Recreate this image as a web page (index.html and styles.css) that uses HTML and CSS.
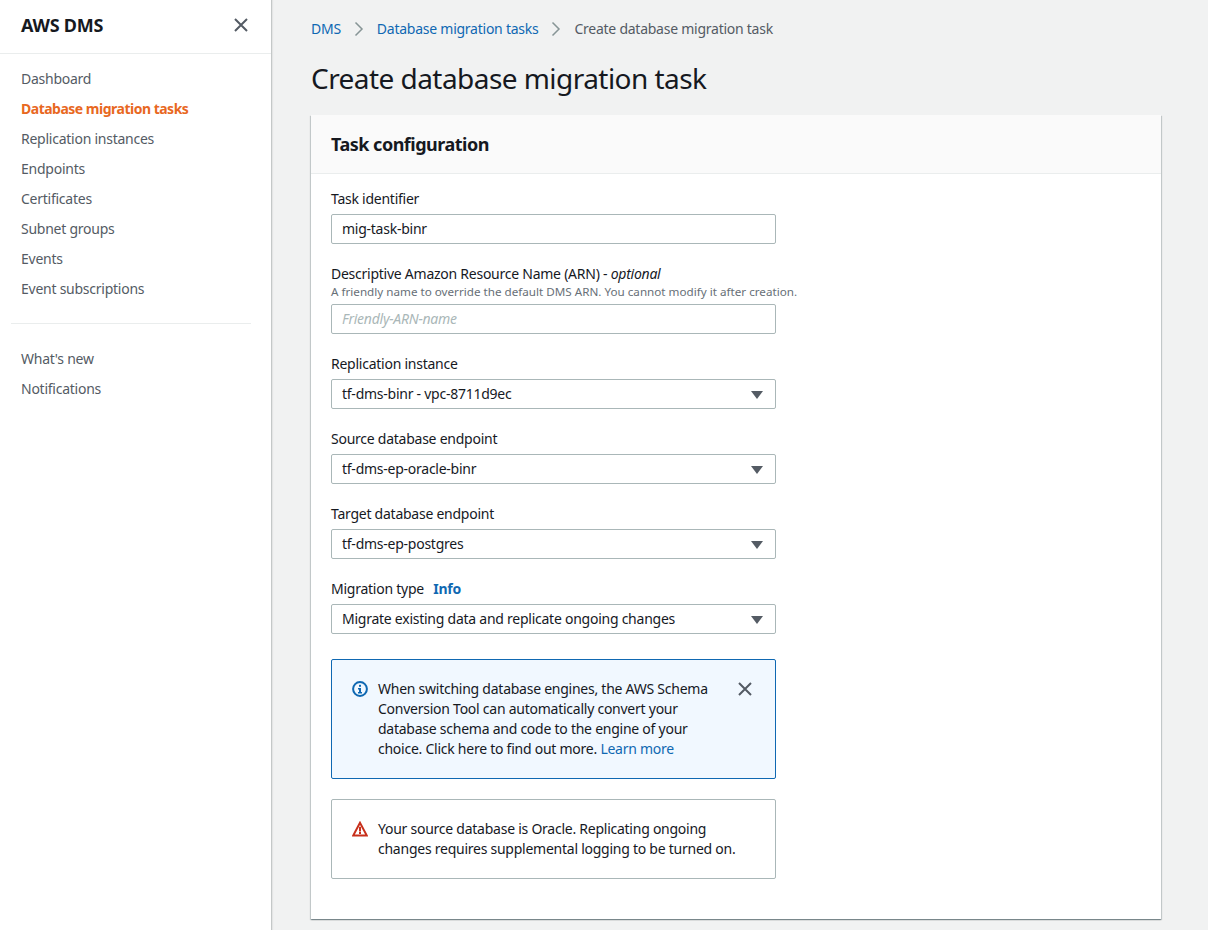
FILE: index.html
```html
<!DOCTYPE html>
<html lang="en">
<head>
    <meta charset="UTF-8">
    <title>Create database migration task</title>
    <link rel="stylesheet" href="styles.css">
</head>
<body>
    <div class="layout">
        <nav class="sidebar">
            <div class="sidebar-header">
                <span class="sidebar-title">AWS DMS</span>
                <svg class="icon-close" width="16" height="16" viewBox="0 0 16 16"><path d="M2 2l12 12M14 2L2 14"/></svg>
            </div>
            <ul class="nav-list">
                <li>Dashboard</li>
                <li class="active">Database migration tasks</li>
                <li>Replication instances</li>
                <li>Endpoints</li>
                <li>Certificates</li>
                <li>Subnet groups</li>
                <li>Events</li>
                <li>Event subscriptions</li>
            </ul>
            <div class="nav-divider"></div>
            <ul class="nav-list nav-list-second">
                <li>What's new</li>
                <li>Notifications</li>
            </ul>
        </nav>

        <main class="content">
            <div class="breadcrumbs">
                <a class="link">DMS</a>
                <svg class="crumb-arrow" width="10" height="16" viewBox="0 0 10 16"><path d="M1.5 1.5L8 8l-6.5 6.5"/></svg>
                <a class="link">Database migration tasks</a>
                <svg class="crumb-arrow" width="10" height="16" viewBox="0 0 10 16"><path d="M1.5 1.5L8 8l-6.5 6.5"/></svg>
                <span class="crumb-current">Create database migration task</span>
            </div>
            <h1 class="page-title">Create database migration task</h1>

            <section class="card">
                <div class="card-header">Task configuration</div>
                <div class="card-body">
                    <div class="field">
                        <div class="field-label">Task identifier</div>
                        <div class="input">mig-task-binr</div>
                    </div>
                    <div class="field">
                        <div class="field-label">Descriptive Amazon Resource Name (ARN) - <i>optional</i></div>
                        <div class="field-desc">A friendly name to override the default DMS ARN. You cannot modify it after creation.</div>
                        <div class="input placeholder">Friendly-ARN-name</div>
                    </div>
                    <div class="field">
                        <div class="field-label">Replication instance</div>
                        <div class="input select">tf-dms-binr - vpc-8711d9ec<span class="caret"></span></div>
                    </div>
                    <div class="field">
                        <div class="field-label">Source database endpoint</div>
                        <div class="input select">tf-dms-ep-oracle-binr<span class="caret"></span></div>
                    </div>
                    <div class="field">
                        <div class="field-label">Target database endpoint</div>
                        <div class="input select">tf-dms-ep-postgres<span class="caret"></span></div>
                    </div>
                    <div class="field">
                        <div class="field-label">Migration type <a class="link info-link">Info</a></div>
                        <div class="input select">Migrate existing data and replicate ongoing changes<span class="caret"></span></div>
                    </div>

                    <div class="alert alert-info">
                        <svg class="alert-icon" width="16" height="16" viewBox="0 0 16 16">
                            <circle cx="8" cy="8" r="6.9" fill="none" stroke="#0f68b2" stroke-width="2"/>
                            <path d="M6 7h3v4h1v1.5H6V11h1V8.5H6z" fill="#0f68b2"/>
                            <rect x="7" y="3.8" width="2" height="2" fill="#0f68b2"/>
                        </svg>
                        <p class="alert-text">When switching database engines, the AWS Schema Conversion Tool can automatically convert your database schema and code to the engine of your choice. Click here to find out more. <a class="link">Learn more</a></p>
                        <svg class="icon-close alert-close" width="16" height="16" viewBox="0 0 16 16"><path d="M2 2l12 12M14 2L2 14"/></svg>
                    </div>

                    <div class="alert alert-warning">
                        <svg class="alert-icon" width="16" height="16" viewBox="0 0 16 16">
                            <path d="M8 1.8L1.2 14.6h13.6z" fill="none" stroke="#c8301c" stroke-width="2" stroke-linejoin="miter"/>
                            <rect x="7" y="5.8" width="2" height="4.7" fill="#c8301c"/>
                            <rect x="7" y="11" width="2" height="2" fill="#c8301c"/>
                        </svg>
                        <p class="alert-text">Your source database is Oracle. Replicating ongoing changes requires supplemental logging to be turned on.</p>
                    </div>
                </div>
            </section>
        </main>
    </div>
</body>
</html>
```

FILE: styles.css
```css
* {
    box-sizing: border-box;
}
html, body {
    height: 100%;
}
body {
    margin: 0;
    background-color: #f1f2f2;
    color: #16191f;
    font-family: "Noto Sans", "Liberation Sans", sans-serif;
    font-size: 14px;
    line-height: 20px;
    letter-spacing: -0.25px;
    overflow: hidden;
}
.layout {
    display: flex;
    height: 930px;
}

/* sidebar */
.sidebar {
    width: 272px;
    flex-shrink: 0;
    background-color: #fff;
    border-right: 1px solid #c4c8c8;
    box-shadow: 1px 0 1px rgba(0, 0, 0, 0.05);
}
.sidebar-header {
    display: flex;
    align-items: center;
    justify-content: space-between;
    height: 54px;
    padding: 0 22px 4px 21px;
    border-bottom: 1px solid #eaeded;
}
.sidebar-title {
    font-size: 18px;
    font-weight: 700;
    line-height: 24px;
}
.icon-close {
    fill: none;
    stroke: #545b64;
    stroke-width: 2;
}
.nav-list {
    list-style: none;
    margin: 0;
    padding: 10px 21px 0;
}
.nav-list li {
    height: 30px;
    line-height: 30px;
    color: #545b64;
}
.nav-list li.active {
    color: #e8681f;
    font-weight: 700;
    letter-spacing: -0.5px;
}
.nav-divider {
    width: 240px;
    margin: 19px 0 0 11px;
    border-top: 1px solid #eaeded;
}
.nav-list-second {
    padding-top: 20px;
}

/* main column */
.content {
    flex: 1;
    padding: 19px 47px 0 39px;
}
.link {
    color: #0f68b2;
}
.breadcrumbs {
    display: flex;
    align-items: center;
    height: 20px;
}
.crumb-arrow {
    margin: 0 13px;
    fill: none;
    stroke: #879596;
    stroke-width: 1.5;
}
.crumb-current {
    color: #545b64;
}
.page-title {
    margin: 21px 0 19px;
    font-size: 28px;
    font-weight: 400;
    line-height: 36px;
    letter-spacing: -0.55px;
}

/* card */
.card {
    background-color: #fff;
    box-shadow: 0 1px 1px 0 rgba(0, 28, 36, 0.3), 1px 1px 1px 0 rgba(0, 28, 36, 0.15), -1px 1px 1px 0 rgba(0, 28, 36, 0.15);
}
.card-header {
    height: 59px;
    padding: 0 20px;
    line-height: 58px;
    font-size: 18px;
    font-weight: 700;
    letter-spacing: -0.5px;
    background-color: #fafafa;
    border-bottom: 1px solid #eaeded;
}
.card-body {
    padding: 15px 20px 40px;
}
.field {
    margin-bottom: 20px;
}
.field-label {
    margin-bottom: 5px;
    line-height: 20px;
}
.field-desc {
    margin-top: -4px;
    margin-bottom: 5px;
    font-size: 11.67px;
    line-height: 14px;
    letter-spacing: 0;
    color: #687078;
}
.info-link {
    margin-left: 6px;
    font-weight: 700;
}
.input {
    position: relative;
    width: 445px;
    height: 30px;
    padding: 0 10px;
    line-height: 28px;
    background-color: #fff;
    border: 1px solid #aab7b8;
    border-radius: 2px;
}
.placeholder {
    color: #aab7b8;
    font-style: italic;
}
.caret {
    position: absolute;
    top: 11px;
    right: 12px;
    border-top: 8px solid #545b64;
    border-left: 6px solid transparent;
    border-right: 6px solid transparent;
}

/* alerts */
.alert {
    display: flex;
    width: 445px;
    padding: 19px 20px 19px 20px;
    border-radius: 2px;
}
.alert-info {
    height: 120px;
    margin-top: 25px;
    background-color: #f1f8ff;
    border: 1px solid #0f68b2;
}
.alert-warning {
    height: 80px;
    margin-top: 20px;
    background-color: #fff;
    border: 1px solid #aab7b8;
}
.alert-icon {
    flex-shrink: 0;
    margin: 2px 10px 0 0;
}
.alert-text {
    flex: 1;
    margin: 0;
}
.alert-close {
    flex-shrink: 0;
    margin: 2px 2px 0 11px;
}
```
